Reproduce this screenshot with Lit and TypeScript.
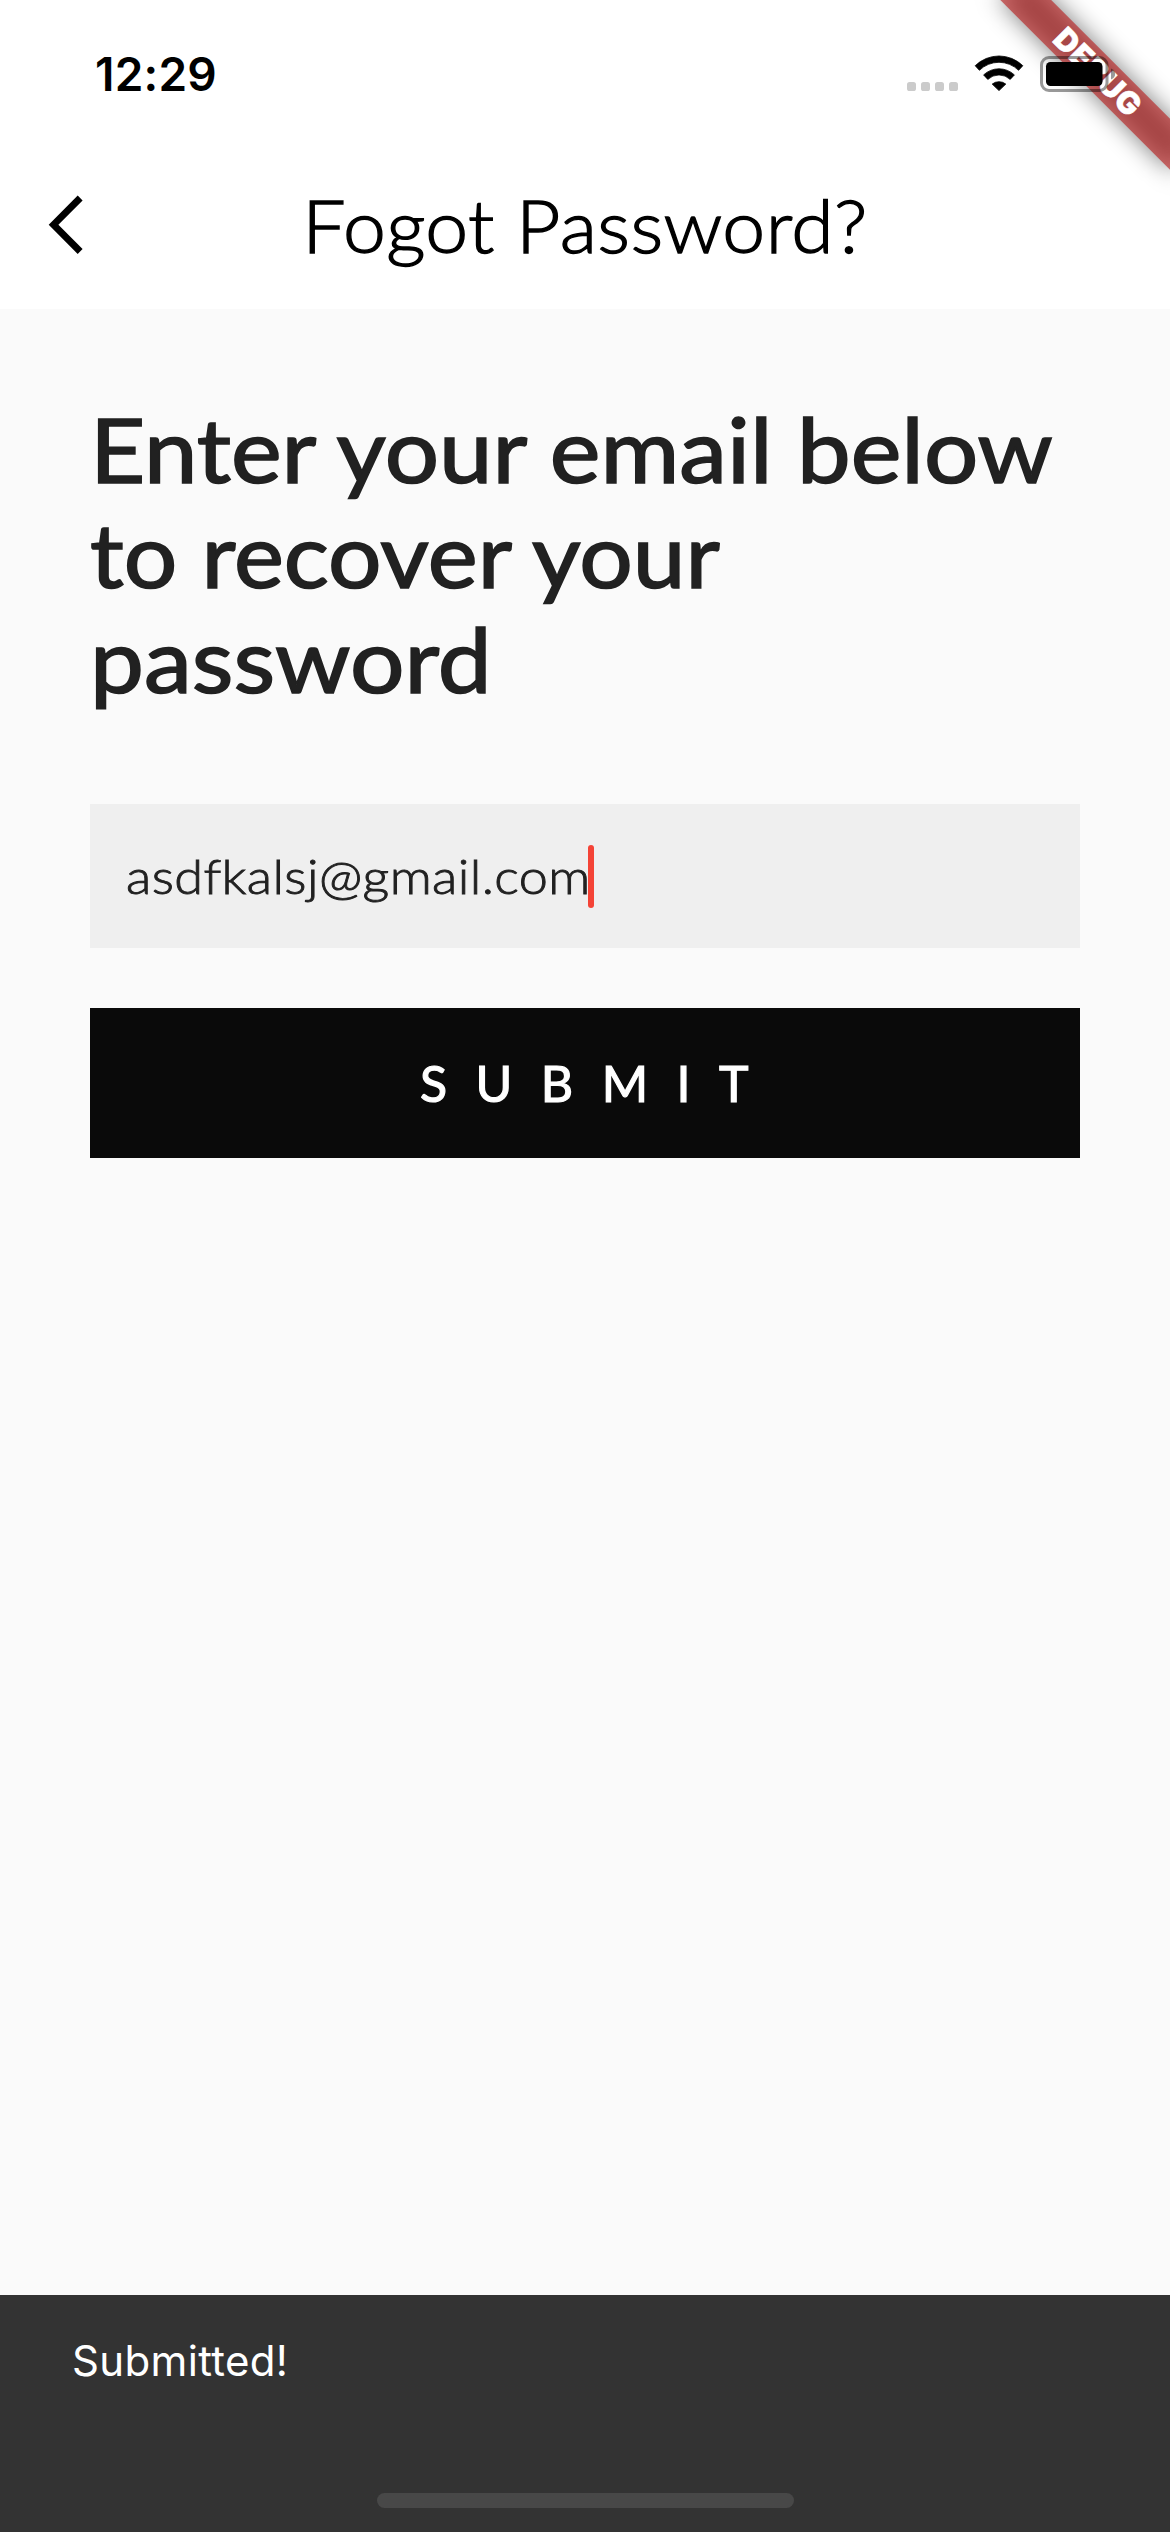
import { LitElement, html, css } from "lit";
import { customElement, property } from "lit/decorators.js";

@customElement("status-bar")
class StatusBar extends LitElement {
  static styles = css`
    :host {
      position: relative;
      z-index: 2;
      display: flex;
      justify-content: space-between;
      align-items: flex-start;
      height: 141px;
      box-sizing: border-box;
      padding: 50px 54px 0 95px;
    }
    .time {
      font: 600 46px/50px Inter, "Liberation Sans", sans-serif;
      letter-spacing: 0.2px;
      color: #000;
      margin-top: -1px;
    }
    .icons {
      display: block;
    }
  `;
  render() {
    return html`
      <div class="time">12:29</div>
      <svg class="icons" width="210" height="46" viewBox="906 50 210 46">
        <g fill="#cbcbcb">
          <rect x="907" y="82" width="9" height="9" rx="2.6" />
          <rect x="921" y="82" width="9" height="9" rx="2.6" />
          <rect x="935" y="82" width="9" height="9" rx="2.6" />
          <rect x="949" y="82" width="9" height="9" rx="2.6" />
        </g>
        <path d="M975.2 65.7A34 34 0 0 1 1022.8 65.7L1018.6 70.3A28 28 0 0 0 979.4 70.3Z" stroke="#000" stroke-width="0.8" stroke-linejoin="round" />
        <path d="M983.6 74.9A22.5 22.5 0 0 1 1014.4 74.9L1010.2 79.4A16.3 16.3 0 0 0 987.8 79.4Z" stroke="#000" stroke-width="0.8" stroke-linejoin="round" />
        <path d="M992.2 84.1A10.8 10.8 0 0 1 1005.8 84.1L999 90.6Z" stroke="#000" stroke-width="0.8" stroke-linejoin="round" />
        <rect x="1041.5" y="57.5" width="65.5" height="33" rx="7.5" fill="none" stroke="#000" stroke-opacity="0.4" stroke-width="3" />
        <rect x="1046" y="62" width="56.5" height="24" rx="4.5" />
        <path d="M1111 68.5C1116.5 70.5 1116.5 77.5 1111 79.5Z" fill-opacity="0.4" />
      </svg>
    `;
  }
}

@customElement("debug-banner")
class DebugBanner extends LitElement {
  static styles = css`
    :host {
      position: absolute;
      top: 0;
      right: 0;
      width: 300px;
      height: 300px;
      overflow: hidden;
      z-index: 1;
    }
    .corner {
      position: absolute;
      left: 300px;
      top: 0;
      width: 0;
      height: 0;
      transform: rotate(45deg);
    }
    .shade,
    .band {
      position: absolute;
      left: -120px;
      top: 84px;
      width: 240px;
      height: 36px;
    }
    .shade {
      background: rgba(0, 0, 0, 0.5);
      filter: blur(12px);
    }
    .band {
      background: rgba(183, 28, 28, 0.627);
      color: #fff;
      font: 900 31px/36px Inter, "Liberation Sans", sans-serif;
      letter-spacing: 0.4px;
      text-align: center;
      -webkit-text-stroke: 0.5px #fff;
    }
  `;
  render() {
    return html`<div class="corner">
      <div class="shade"></div>
      <div class="band">DEBUG</div>
    </div>`;
  }
}

@customElement("nav-bar")
class NavBar extends LitElement {
  @property() heading = "";
  static styles = css`
    :host {
      display: grid;
      grid-template-columns: 168px 1fr 168px;
      align-items: center;
      height: 168px;
    }
    .back {
      display: block;
      margin-left: 44px;
    }
    .title {
      margin: 0;
      text-align: center;
      white-space: nowrap;
      font: 300 72px/86px Lato, "Open Sans", sans-serif;
      letter-spacing: 0.4px;
      color: #000;
      transform: scaleX(1.068);
      -webkit-text-stroke: 1.3px #000;
    }
  `;
  render() {
    return html`
      <svg class="back" width="48" height="72" viewBox="44 189 48 72">
        <path d="M48.7 224.7L77.7 195.5L82.6 200.4L58.4 224.7L82.6 249L77.7 254Z" />
      </svg>
      <h1 class="title">${this.heading}</h1>
    `;
  }
}

@customElement("snack-bar")
class SnackBar extends LitElement {
  @property() message = "";
  static styles = css`
    :host {
      display: flex;
      flex-direction: column;
      justify-content: space-between;
      height: 237px;
      box-sizing: border-box;
      padding: 41px 72px 24px;
      background: #333;
    }
    .message {
      font: 400 42px/50px Inter, "Liberation Sans", sans-serif;
      letter-spacing: 0.35px;
      color: #fff;
    }
    .home {
      align-self: center;
      width: 417px;
      height: 15px;
      border-radius: 8px;
      background: #484848;
    }
  `;
  render() {
    return html`<div class="message">${this.message}</div>
      <div class="home"></div>`;
  }
}

@customElement("app-root")
class AppRoot extends LitElement {
  static styles = css`
    :host {
      position: relative;
      display: flex;
      flex-direction: column;
      width: 1170px;
      height: 2532px;
      overflow: hidden;
      background: #fafafa;
      font-family: Lato, "Open Sans", sans-serif;
      font-variant-ligatures: none;
    }
    .top {
      background: #fff;
    }
    .content {
      flex: 1;
      padding: 87px 90px 0;
    }
    .prompt {
      margin: 0 0 93px;
      font-weight: 400;
      font-size: 90px;
      line-height: 105px;
      color: #212121;
      -webkit-text-stroke: 1.6px #212121;
    }
    .line {
      display: block;
      width: max-content;
      white-space: nowrap;
      transform-origin: left center;
    }
    .first {
      transform: scaleX(1.065);
    }
    .second {
      transform: scaleX(1.05);
    }
    .third {
      transform: scaleX(1.069);
    }
    .field {
      display: flex;
      align-items: center;
      height: 144px;
      box-sizing: border-box;
      padding: 0 36px;
      background: #efefef;
      font-size: 48px;
      font-weight: 300;
      line-height: 60px;
      color: #212121;
    }
    .value {
      width: 462px;
      white-space: nowrap;
      letter-spacing: 0.35px;
      transform: scaleX(1.088);
      transform-origin: left center;
      -webkit-text-stroke: 0.9px #212121;
    }
    .caret {
      width: 6px;
      height: 63px;
      border-radius: 3px;
      background: #f44336;
    }
    .submit {
      display: block;
      width: 100%;
      height: 150px;
      margin: 60px 0 0;
      padding: 0 0 0 27px;
      border: 0;
      background: #0a0a0a;
      color: #fff;
      font: 400 50px/60px Lato, "Open Sans", sans-serif;
      letter-spacing: 28.5px;
      -webkit-text-stroke: 1.2px #fff;
    }
  `;
  render() {
    return html`
      <header class="top">
        <status-bar></status-bar>
        <nav-bar heading="Fogot Password?"></nav-bar>
      </header>
      <debug-banner></debug-banner>
      <main class="content">
        <h2 class="prompt">
          <span class="line first">Enter your email below</span>
          <span class="line second">to recover your</span>
          <span class="line third">password</span>
        </h2>
        <div class="field"><span class="value">asdfkalsj@gmail.com</span><span class="caret"></span></div>
        <button class="submit">SUBMIT</button>
      </main>
      <snack-bar message="Submitted!"></snack-bar>
    `;
  }
}
